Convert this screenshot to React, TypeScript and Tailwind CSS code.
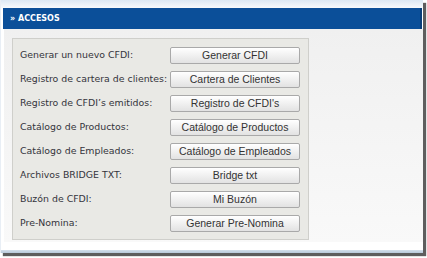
const rows = [
  { label: "Generar un nuevo CFDI:", button: "Generar CFDI" },
  { label: "Registro de cartera de clientes:", button: "Cartera de Clientes" },
  { label: "Registro de CFDI’s emitidos:", button: "Registro de CFDI's" },
  { label: "Catálogo de Productos:", button: "Catálogo de Productos" },
  { label: "Catálogo de Empleados:", button: "Catálogo de Empleados" },
  { label: "Archivos BRIDGE TXT:", button: "Bridge txt" },
  { label: "Buzón de CFDI:", button: "Mi Buzón" },
  { label: "Pre-Nomina:", button: "Generar Pre-Nomina" },
];

export default function App() {
  return (
    <div className="w-[427px] h-[258px] bg-white overflow-hidden">
      <div className="w-[423px] h-[253px] flex flex-col bg-gradient-to-b from-[#dce8f4] to-white to-[4%] border-l border-[#e8eef5] shadow-[3px_3px_1px_rgba(40,40,40,0.75)]">
        {/* header */}
        <div className="mt-[8px] ml-[2px] mr-[1px] h-[21px] bg-[#0b4f99] border-r-2 border-[#083e7a] flex items-center pl-[7px]">
          <span className="text-white font-bold text-[8px] font-['DejaVu_Sans',sans-serif]">
            » ACCESOS
          </span>
        </div>

        {/* body */}
        <div className="flex-1 ml-[2px] bg-gradient-to-b from-[#f0f0f0] to-[#f9f9f9] border-l border-white pt-[9px] pl-[8px]">
          <div className="w-[297px] h-[202px] bg-[#e9e9e5] border border-[#cfcfcb] pt-[8px] pl-[7px] flex flex-col gap-[7px]">
            {rows.map((r) => (
              <div key={r.label} className="flex items-center h-[17px]">
                <span className="w-[150px] text-[9.4px] text-[#34343c] font-['DejaVu_Sans',sans-serif] whitespace-nowrap">
                  {r.label}
                </span>
                <button className="w-[130px] h-[17px] rounded-[2px] border border-[#a9a9a9] bg-gradient-to-b from-white to-[#e2e2e2] text-[10.5px] text-[#333] font-['Liberation_Sans',Arial,sans-serif] leading-none">
                  {r.button}
                </button>
              </div>
            ))}
          </div>
        </div>

        {/* bottom strip */}
        <div className="h-[8px] bg-white" />
        <div className="h-[3px] bg-gradient-to-b from-[#d4e0ec] to-[#b8c9da]" />
      </div>
    </div>
  );
}
